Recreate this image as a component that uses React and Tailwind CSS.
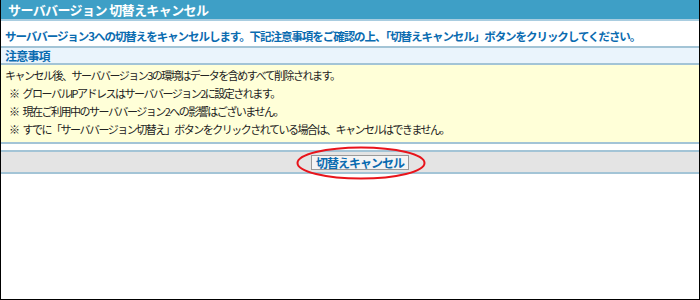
import React from "react";

export default function App() {
  const font = { fontFamily: '"Noto Sans CJK JP", "Noto Sans", sans-serif' };
  return (
    <div className="w-[700px] h-[300px] bg-white border-x border-b border-black overflow-hidden" style={font}>
      <div className="h-[21px] bg-[#3e9fc6] border-b-2 border-[#a9cde0] pl-[7px] text-white font-bold text-[13px] tracking-[-0.6px] leading-[19px] whitespace-nowrap">
        サーババージョン 切替えキャンセル
      </div>
      <div className="h-[27px] border-b-2 border-[#a3c4d6] pl-[4px] pt-[6px] text-[#0a6bb0] font-bold text-[11.5px] tracking-[-1.05px] leading-[18px] whitespace-nowrap">
        サーババージョン3への切替えをキャンセルします。下記注意事項をご確認の上、「切替えキャンセル」ボタンをクリックしてください。
      </div>
      <div className="h-[17px] bg-[#eaf4fc] border-b-2 border-[#a3c4d6] pl-[4px] text-[#0a6bb0] font-bold text-[12px] tracking-[-0.8px] leading-[15px] whitespace-nowrap">
        注意事項
      </div>
      <div className="h-[79px] bg-[#ffffd8] border-b-2 border-[#a3c4d6] pl-[4px] pt-[1px] text-[#222] text-[11px] tracking-[-1.5px] leading-[18px] whitespace-nowrap">
        <div>キャンセル後、サーババージョン3の環境はデータを含めすべて削除されます。</div>
        <div className="pl-[4px]"><span className="mr-[4px]">※</span>グローバルIPアドレスはサーババージョン2に設定されます。</div>
        <div className="pl-[4px]"><span className="mr-[4px]">※</span>現在ご利用中のサーババージョン2への影響はございません。</div>
        <div className="pl-[4px]"><span className="mr-[4px]">※</span>すでに「サーババージョン切替え」ボタンをクリックされている場合は、キャンセルはできません。</div>
      </div>
      <div className="h-[6px]" />
      <div className="h-[24px] bg-[#e4e4e4] border-y-2 border-[#a3c4d6] flex items-center justify-center">
        <div className="relative ml-[20px]">
          <button className="w-[98px] h-[15px] bg-[#f4f4f4] border border-[#9a9a9a] text-[#0a6bb0] font-bold text-[12px] tracking-[-1px] leading-[13px] flex items-center justify-center whitespace-nowrap" style={font}>
            切替えキャンセル
          </button>
          <svg className="absolute left-[-15px] top-[-9px]" width="130" height="34" viewBox="0 0 130 34">
            <ellipse cx="65" cy="17" rx="63.5" ry="15.5" fill="none" stroke="#e8141b" strokeWidth="2" />
          </svg>
        </div>
      </div>
    </div>
  );
}
